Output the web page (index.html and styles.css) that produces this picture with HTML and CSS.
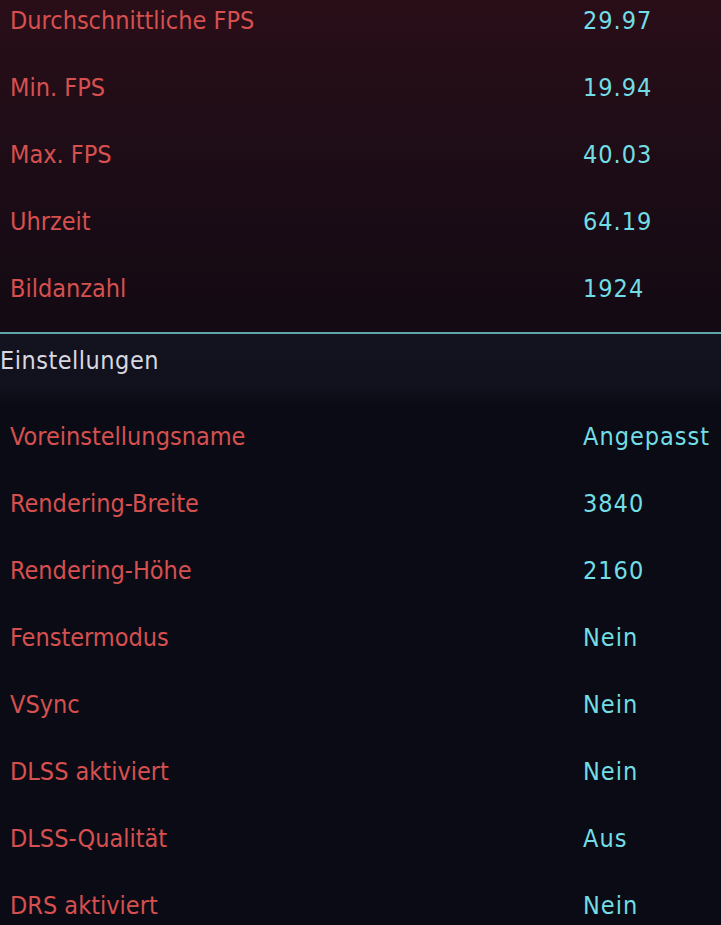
FILE: index.html
```html
<!DOCTYPE html>
<html lang="de">
<head>
    <meta charset="UTF-8">
    <meta name="viewport" content="width=device-width, initial-scale=1.0">
    <title>Benchmark-Ergebnisse</title>
    <link rel="stylesheet" href="styles.css">
</head>
<body>
    <section class="results">
        <ul class="stats">
            <li class="row"><span class="label">Durchschnittliche FPS</span><span class="value">29.97</span></li>
            <li class="row"><span class="label">Min. FPS</span><span class="value">19.94</span></li>
            <li class="row"><span class="label">Max. FPS</span><span class="value">40.03</span></li>
            <li class="row"><span class="label">Uhrzeit</span><span class="value">64.19</span></li>
            <li class="row"><span class="label">Bildanzahl</span><span class="value">1924</span></li>
        </ul>
    </section>

    <section class="settings">
        <h2 class="section-title">Einstellungen</h2>
        <ul class="stats">
            <li class="row"><span class="label">Voreinstellungsname</span><span class="value">Angepasst</span></li>
            <li class="row"><span class="label">Rendering-Breite</span><span class="value">3840</span></li>
            <li class="row"><span class="label">Rendering-Höhe</span><span class="value">2160</span></li>
            <li class="row"><span class="label">Fenstermodus</span><span class="value">Nein</span></li>
            <li class="row"><span class="label">VSync</span><span class="value">Nein</span></li>
            <li class="row"><span class="label">DLSS aktiviert</span><span class="value">Nein</span></li>
            <li class="row"><span class="label">DLSS-Qualität</span><span class="value">Aus</span></li>
            <li class="row"><span class="label">DRS aktiviert</span><span class="value">Nein</span></li>
        </ul>
    </section>
</body>
</html>
```

FILE: styles.css
```css
html, body {
    margin: 0;
    padding: 0;
    background-color: #0b0b15;
}
body {
    font-family: "DejaVu Sans Condensed", "DejaVu Sans", sans-serif;
    font-stretch: condensed;
    overflow: hidden;
}
.stats {
    list-style: none;
    margin: 0;
    padding: 0;
}
.row {
    display: flex;
    align-items: center;
    height: 67px;
    font-size: 25px;
}
.label {
    width: 583px;
    padding-left: 10px;
    box-sizing: border-box;
    color: #d6504f;
}
.value {
    color: #72dde4;
    letter-spacing: 1px;
}
.results {
    background: linear-gradient(to bottom, #2a0e18 0%, #1c0c16 55%, #130a13 100%);
    margin-top: -13px;
    padding-bottom: 10px;
    border-bottom: 2px solid #5ea4a8;
}
.settings {
    background: linear-gradient(to bottom, #13121f 0, #11111d 53px, #0b0b15 70px, #0b0b15 100%);
}
.section-title {
    margin: 0;
    height: 53px;
    line-height: 53px;
    font-size: 25px;
    font-weight: normal;
    letter-spacing: 0.5px;
    color: #d8d8e0;
    margin-bottom: 16px;
}
```
